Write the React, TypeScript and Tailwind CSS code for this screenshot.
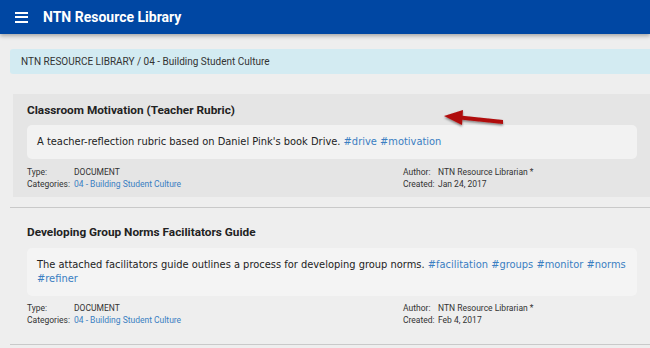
export default function App() {
  const resources = [
    {
      title: "Classroom Motivation (Teacher Rubric)",
      text: "A teacher-reflection rubric based on Daniel Pink's book Drive.",
      tags: ["#drive", "#motivation"],
      created: "Jan 24, 2017",
      active: true,
    },
    {
      title: "Developing Group Norms Facilitators Guide",
      text: "The attached facilitators guide outlines a process for developing group norms.",
      tags: ["#facilitation", "#groups", "#monitor", "#norms", "#refiner"],
      created: "Feb 4, 2017",
      active: false,
    },
  ];

  return (
    <div className="w-[650px] h-[348px] overflow-hidden bg-[#eeeeee] font-['Roboto',sans-serif] text-[#333]">
      {/* App bar */}
      <header className="relative z-10 h-[34px] bg-[#0047a3] flex items-center shadow-[0_2px_4px_rgba(0,0,0,0.3)]">
        <div className="ml-[15px] w-[13px] flex flex-col gap-[2.5px]">
          <span className="h-[2px] bg-white" />
          <span className="h-[2px] bg-white" />
          <span className="h-[2px] bg-white" />
        </div>
        <h1 className="ml-[15px] text-white font-bold text-[14px] leading-none">NTN Resource Library</h1>
      </header>

      {/* Breadcrumb */}
      <div className="mt-[15px] ml-[10px] h-[25px] bg-[#d3ebf2] rounded-l-[3px] flex items-center pl-[11px] text-[10px] text-[#333]">
        NTN RESOURCE LIBRARY / 04 - Building Student Culture
      </div>

      <div className="relative mt-[20px]">
        {resources.map((r, i) => (
          <div key={i}>
            {i > 0 && <div className="ml-[10px] h-px bg-[#c9c9c9]" />}
            <div className={`ml-[13px] pl-[14px] pr-[13px] ${r.active ? "bg-[#e5e5e5] pt-[9px] pb-[7px]" : "pt-[17px] pb-[18px]"}`}>
              <h2 className="font-bold text-[11.8px] leading-[15px] text-[#222]">{r.title}</h2>
              <div className={`${r.active ? "mt-[7px] bg-[#f2f2f2]" : "mt-[8px] bg-[#f4f4f4]"} rounded-[5px] pl-[10px] pr-[6px] py-[10px] font-['DejaVu_Sans',sans-serif] text-[9.9px] leading-[14px] text-[#222]`}>
                {r.text}{" "}
                {r.tags.map((t) => (
                  <span key={t} className="text-[#3a7ec2]">{t} </span>
                ))}
              </div>
              <div className={`${r.active ? "mt-[7px]" : "mt-[6px]"} flex text-[8.5px] leading-[12px] text-[#333]`}>
                <div className="w-[376px] grid grid-cols-[47px_1fr]">
                  <span>Type:</span>
                  <span>DOCUMENT</span>
                  <span>Categories:</span>
                  <span className="text-[#3a7ec2]">04 - Building Student Culture</span>
                </div>
                <div className="grid grid-cols-[35px_1fr]">
                  <span>Author:</span>
                  <span>NTN Resource Librarian *</span>
                  <span>Created:</span>
                  <span>{r.created}</span>
                </div>
              </div>
            </div>
            {i === 0 && <div className="h-[10px]" />}
          </div>
        ))}
        <div className="ml-[10px] h-px bg-[#c9c9c9]" />

        {/* Annotation arrow */}
        <svg className="absolute left-[438px] top-[12px]" width="75" height="24" viewBox="0 0 75 24">
          <defs>
            <filter id="sh" x="-20%" y="-50%" width="140%" height="200%">
              <feDropShadow dx="0" dy="1.5" stdDeviation="1.2" floodColor="#000" floodOpacity="0.45" />
            </filter>
          </defs>
          <g filter="url(#sh)" fill="#b00d0d">
            <polygon points="6,10 25,4 24,19" />
            <polygon points="22,9.5 65,14 65,18 22,13.5" />
          </g>
        </svg>
      </div>
    </div>
  );
}
